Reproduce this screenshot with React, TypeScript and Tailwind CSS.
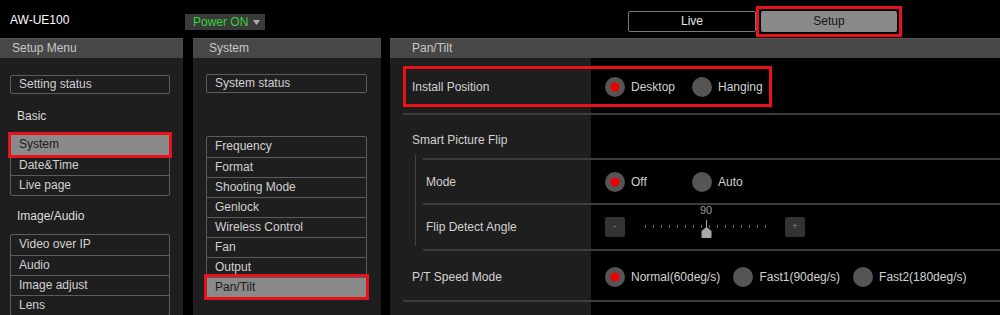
import React from "react";

const RED = "border-[#e8121c]";

const MenuButton: React.FC<{ label: string; className?: string }> = ({ label, className }) => (
  <div
    className={`h-[19px] border border-[#5c5c5c] rounded-[2px] pl-[8px] leading-[17px] text-[#d2d2d2] ${className ?? ""}`}
  >
    {label}
  </div>
);

const MenuList: React.FC<{ items: string[]; selected?: string; className?: string }> = ({
  items,
  selected,
  className,
}) => (
  <div className={`border border-[#5c5c5c] rounded-[2px] ${className ?? ""}`}>
    {items.map((item, i) => {
      const active = item === selected;
      return (
        <div
          key={item}
          className={`h-[20px] pl-[8px] leading-[19px] ${i > 0 ? "border-t border-[#5c5c5c]" : ""} ${
            active
              ? "relative z-10 bg-[#8a8a8a] text-[#1c1c1c] outline-[3px] outline-solid outline-[#e8121c]"
              : "text-[#d2d2d2]"
          }`}
        >
          {item}
        </div>
      );
    })}
  </div>
);

const Header: React.FC<{ title: string; pad: string }> = ({ title, pad }) => (
  <div className={`h-[20px] bg-[#474747] border-t border-[#575757] leading-[18px] text-[#c8c8c8] ${pad}`}>
    {title}
  </div>
);

const Radio: React.FC<{ label: string; checked?: boolean }> = ({ label, checked }) => (
  <div className="flex items-center shrink-0 min-w-[74px] mr-[13px]">
    <svg width="20" height="20" viewBox="0 0 20 20" className="shrink-0">
      <circle cx="10" cy="10" r="10" fill="#555" />
      {checked && <circle cx="10" cy="10" r="4.6" fill="#ee0000" />}
    </svg>
    <span className="ml-[6px] text-[#d2d2d2] whitespace-nowrap">{label}</span>
  </div>
);

const Divider: React.FC = () => <div className="h-[2px] bg-[#3c3c3c]" />;

const Slider: React.FC = () => {
  const ticks = Array.from({ length: 16 }, (_, i) => i);
  return (
    <div className="flex items-center shrink-0">
      <div className="w-[20px] h-[20px] rounded-[2px] bg-[#333] text-[#8a8a8a] text-[9px] flex items-center justify-center">
        -
      </div>
      <div className="relative w-[160px] h-[20px]">
        {ticks.map((i) => (
          <span
            key={i}
            className="absolute top-[8px] w-[1px] h-[3px] bg-[#6e6e6e]"
            style={{ left: 20 + i * 8 }}
          />
        ))}
        <span className="absolute left-[71px] top-[-13px] w-[20px] text-center text-[11px] leading-[12px] text-[#9a9a9a]">
          90
        </span>
        <svg className="absolute left-[76px] top-[3px]" width="11" height="18" viewBox="0 0 11 18">
          <line x1="5.5" y1="0" x2="5.5" y2="8" stroke="#a8a8a8" strokeWidth="1" />
          <path d="M5.5 7 L10.5 11 L10.5 17 Q10.5 18 9.5 18 L1.5 18 Q0.5 18 0.5 17 L0.5 11 Z" fill="#a8a8a8" />
        </svg>
      </div>
      <div className="w-[20px] h-[20px] rounded-[2px] bg-[#333] text-[#8a8a8a] text-[9px] flex items-center justify-center">
        +
      </div>
    </div>
  );
};

export default function App() {
  return (
    <div className="w-[1000px] h-[315px] overflow-hidden bg-black text-[12px] font-['Liberation_Sans',Arial,sans-serif] text-[#d2d2d2]">
      {/* top bar */}
      <div className="h-[38px] flex items-start pl-[10px]">
        <div className="w-[175px] mt-[13px] leading-[14px] text-white">AW-UE100</div>
        <div className="mt-[14px] w-[80px] h-[16px] bg-[#3a3a3a] flex items-center pl-[8px] text-[#35d43a] leading-[16px]">
          <span>Power ON</span>
          <svg className="ml-auto mr-[5px]" width="7" height="5" viewBox="0 0 7 5">
            <path d="M0 0 L7 0 L3.5 5 Z" fill="#b0b0b0" />
          </svg>
        </div>
        <div className="ml-[363px] mt-[11px] w-[128px] h-[21px] border border-[#7a7a7a] rounded-[2px] text-center leading-[19px] text-[#e8e8e8]">
          Live
        </div>
        <div className={`mt-[6px] w-[146px] h-[31px] border-[3px] ${RED} p-[2px]`}>
          <div className="h-full bg-[#8a8a8a] rounded-[2px] text-center leading-[21px] text-[#151515]">Setup</div>
        </div>
      </div>

      <div className="flex h-[277px]">
        {/* setup menu */}
        <div className="w-[183px] bg-[#1e1e1e]">
          <Header title="Setup Menu" pad="pl-[12px]" />
          <div className="pl-[10px] w-[170px]">
            <MenuButton label="Setting status" className="mt-[17px]" />
            <div className="mt-[12px] h-[20px] leading-[20px] pl-[7px] text-[#dcdcdc]">Basic</div>
            <MenuList className="mt-[8px]" items={["System", "Date&Time", "Live page"]} selected="System" />
            <div className="mt-[10px] h-[20px] leading-[20px] pl-[7px] text-[#dcdcdc]">Image/Audio</div>
            <MenuList className="mt-[8px]" items={["Video over IP", "Audio", "Image adjust", "Lens"]} />
          </div>
        </div>

        <div className="w-[10px]" />

        {/* system menu */}
        <div className="w-[188px] bg-[#1e1e1e]">
          <Header title="System" pad="pl-[16px]" />
          <div className="pl-[13px] w-[174px]">
            <MenuButton label="System status" className="mt-[16px]" />
            <MenuList
              className="mt-[43px]"
              items={[
                "Frequency",
                "Format",
                "Shooting Mode",
                "Genlock",
                "Wireless Control",
                "Fan",
                "Output",
                "Pan/Tilt",
              ]}
              selected="Pan/Tilt"
            />
          </div>
        </div>

        <div className="w-[9px]" />

        {/* pan/tilt settings */}
        <div className="flex-1 bg-[linear-gradient(to_right,#1e1e1e_201px,#000_201px)]">
          <Header title="Pan/Tilt" pad="pl-[22px]" />
          <div className="pl-[13px]">
            <div className={`mt-[8px] w-[369px] h-[41px] border-[3px] ${RED} flex items-center`}>
              <div className="w-[199px] shrink-0 pl-[6px]">Install Position</div>
              <Radio label="Desktop" checked />
              <Radio label="Hanging" />
            </div>
            <div className="h-[6px]" />
            <Divider />

            <div className="h-[40px] pt-[10px] flex items-center pl-[9px]">Smart Picture Flip</div>

            <div className="flex">
              <div className="w-[12px]" />
              <div className="w-[1px] bg-[#444] mb-[5px]" />
              <div className="flex-1 ml-[7px] pt-[3px]">
                <Divider />
                <div className="h-[43px] flex items-center">
                  <div className="w-[182px] shrink-0 pl-[3px]">Mode</div>
                  <Radio label="Off" checked />
                  <Radio label="Auto" />
                </div>
                <Divider />
                <div className="h-[44px] flex items-center">
                  <div className="w-[182px] shrink-0 pl-[3px]">Flip Detect Angle</div>
                  <Slider />
                </div>
                <Divider />
              </div>
            </div>

            <div className="h-[49px] pt-[2px] flex items-center">
              <div className="w-[202px] shrink-0 pl-[9px]">P/T Speed Mode</div>
              <Radio label="Normal(60deg/s)" checked />
              <Radio label="Fast1(90deg/s)" />
              <Radio label="Fast2(180deg/s)" />
            </div>
            <Divider />
          </div>
        </div>
      </div>
    </div>
  );
}
